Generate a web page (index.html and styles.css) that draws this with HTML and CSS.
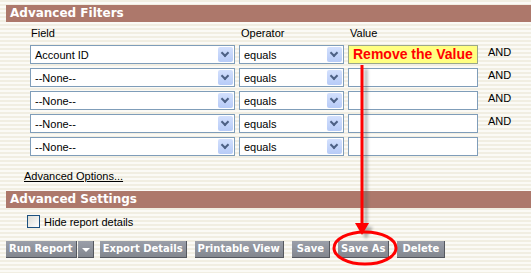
FILE: index.html
```html
<!DOCTYPE html>
<html lang="en">
<head>
    <meta charset="UTF-8">
    <title>Report Filters</title>
    <link rel="stylesheet" href="styles.css">
</head>
<body>
  <div class="page">
    <div class="section-bar">Advanced Filters</div>

    <div class="filters">
        <div class="filter-row labels">
            <span class="col-field">Field</span>
            <span class="col-op">Operator</span>
            <span class="col-value">Value</span>
        </div>

        <div class="filter-row">
            <div class="select col-field"><span>Account ID</span><i class="arrow"></i></div>
            <div class="select col-op"><span>equals</span><i class="arrow"></i></div>
            <div class="input col-value highlight">Remove the Value</div>
            <span class="and">AND</span>
        </div>
        <div class="filter-row">
            <div class="select col-field"><span>--None--</span><i class="arrow"></i></div>
            <div class="select col-op"><span>equals</span><i class="arrow"></i></div>
            <div class="input col-value"></div>
            <span class="and">AND</span>
        </div>
        <div class="filter-row">
            <div class="select col-field"><span>--None--</span><i class="arrow"></i></div>
            <div class="select col-op"><span>equals</span><i class="arrow"></i></div>
            <div class="input col-value"></div>
            <span class="and">AND</span>
        </div>
        <div class="filter-row">
            <div class="select col-field"><span>--None--</span><i class="arrow"></i></div>
            <div class="select col-op"><span>equals</span><i class="arrow"></i></div>
            <div class="input col-value"></div>
            <span class="and">AND</span>
        </div>
        <div class="filter-row">
            <div class="select col-field"><span>--None--</span><i class="arrow"></i></div>
            <div class="select col-op"><span>equals</span><i class="arrow"></i></div>
            <div class="input col-value"></div>
        </div>
    </div>

    <a class="adv-link" href="#">Advanced Options...</a>

    <div class="section-bar">Advanced Settings</div>

    <label class="check-row"><span class="checkbox"></span>Hide report details</label>

    <div class="button-group">
        <div class="split">
            <button>Run Report</button><button class="drop"><i></i></button>
        </div>
        <button>Export Details</button>
        <button>Printable View</button>
        <button class="wide">Save</button>
        <button>Save As</button>
        <button class="wide">Delete</button>
    </div>
  </div>

  <!-- annotation drawn over the page -->
  <svg class="annotation" width="531" height="273" viewBox="0 0 531 273">
      <defs>
          <filter id="shadow" x="-50%" y="-50%" width="200%" height="200%">
              <feGaussianBlur stdDeviation="1.5"/>
          </filter>
      </defs>
      <g opacity="0.45" filter="url(#shadow)" transform="translate(4,3)">
          <line x1="362" y1="66" x2="362" y2="226" stroke="#555" stroke-width="3"/>
          <polygon points="355,224 369,224 362,236" fill="#555"/>
      </g>
      <line x1="362" y1="65" x2="362" y2="226" stroke="#ff0000" stroke-width="3"/>
      <polygon points="355,223 369,223 362,235" fill="#ff0000"/>
      <ellipse cx="365" cy="248" rx="31" ry="16" fill="none" stroke="#ff0000" stroke-width="3"/>
  </svg>
</body>
</html>
```

FILE: styles.css
```css
body {
    margin: 0;
    width: 531px;
    height: 273px;
    overflow: hidden;
    font-family: Tahoma, "DejaVu Sans", sans-serif;
    background: repeating-linear-gradient(to bottom, #f1eee2 0, #f1eee2 2px, #fbfaf6 2px, #fbfaf6 4px);
    position: relative;
}
.page {
    padding: 5px 0 0 6px;
}
.section-bar {
    height: 17px;
    line-height: 17px;
    background-color: #ad786b;
    color: white;
    font-family: "DejaVu Sans", sans-serif;
    font-weight: bold;
    font-size: 12px;
    padding-left: 4px;
}
.filters {
    padding-left: 24px;
    margin-top: 5px;
    display: flex;
    flex-direction: column;
    gap: 4px;
}
.filter-row {
    display: flex;
    align-items: center;
    height: 19px;
    font-family: "Liberation Sans", Arial, sans-serif;
    font-size: 11px;
    color: #000;
}
.filter-row.labels {
    height: 14px;
    align-items: flex-start;
}
.col-field {
    width: 205px;
    margin-right: 4px;
}
.col-op {
    width: 105px;
    margin-right: 4px;
}
.col-value {
    width: 130px;
}
.labels .col-field, .labels .col-op {
    padding-left: 1px;
}
.select, .input {
    box-sizing: border-box;
    height: 19px;
    border: 1px solid #7f9db9;
    background: white;
    display: flex;
    align-items: center;
}
.select span {
    flex-grow: 1;
    padding-left: 4px;
    white-space: nowrap;
    overflow: hidden;
}
.arrow {
    width: 15px;
    height: 15px;
    margin-right: 1px;
    border-radius: 2px;
    background: linear-gradient(#d3e0fd, #b7cbf7);
    position: relative;
}
.arrow::after {
    content: "";
    position: absolute;
    left: 4px;
    top: 3px;
    width: 4px;
    height: 4px;
    border-right: 2px solid #4d6185;
    border-bottom: 2px solid #4d6185;
    transform: rotate(45deg);
}
.input.highlight {
    background: #ffff80;
    border-color: #9aa88a;
    color: #ff0000;
    font-weight: bold;
    font-size: 14px;
    padding-left: 4px;
    align-items: flex-end;
    line-height: 17px;
}
.and {
    margin-left: 10px;
    align-self: flex-start;
    margin-top: 1px;
}
.adv-link {
    display: inline-block;
    margin: 14px 0 0 18px;
    font-family: "Liberation Sans", Arial, sans-serif;
    font-size: 11px;
    color: #000;
    text-decoration: underline;
    height: 16px;
}
.adv-link + .section-bar {
    margin-top: 5px;
}
.check-row {
    display: flex;
    align-items: center;
    margin: 6px 0 0 21px;
    font-family: "Liberation Sans", Arial, sans-serif;
    font-size: 11px;
    height: 15px;
}
.checkbox {
    box-sizing: border-box;
    width: 13px;
    height: 13px;
    border: 1px solid #1c5180;
    background: linear-gradient(135deg, #dcdcd5, #ffffff);
    margin-right: 4px;
}
.button-group {
    display: flex;
    gap: 8px;
    margin-top: 12px;
}
.split {
    display: flex;
    gap: 1px;
    margin-right: -2px;
}
button {
    height: 17px;
    padding: 0 3px;
    background: linear-gradient(#9b9fa9, #83878f);
    color: white;
    border: none;
    border-right: 1px solid #55585f;
    border-bottom: 1px solid #55585f;
    font-family: "DejaVu Sans", sans-serif;
    font-weight: bold;
    font-size: 10px;
    line-height: 16px;
}
button.wide {
    padding: 0 5px;
}
button.drop {
    width: 16px;
    padding: 0;
    position: relative;
}
button.drop i {
    position: absolute;
    left: 4px;
    top: 7px;
    border-left: 4px solid transparent;
    border-right: 4px solid transparent;
    border-top: 4px solid white;
}
.annotation {
    position: absolute;
    top: 0;
    left: 0;
    pointer-events: none;
}
```
